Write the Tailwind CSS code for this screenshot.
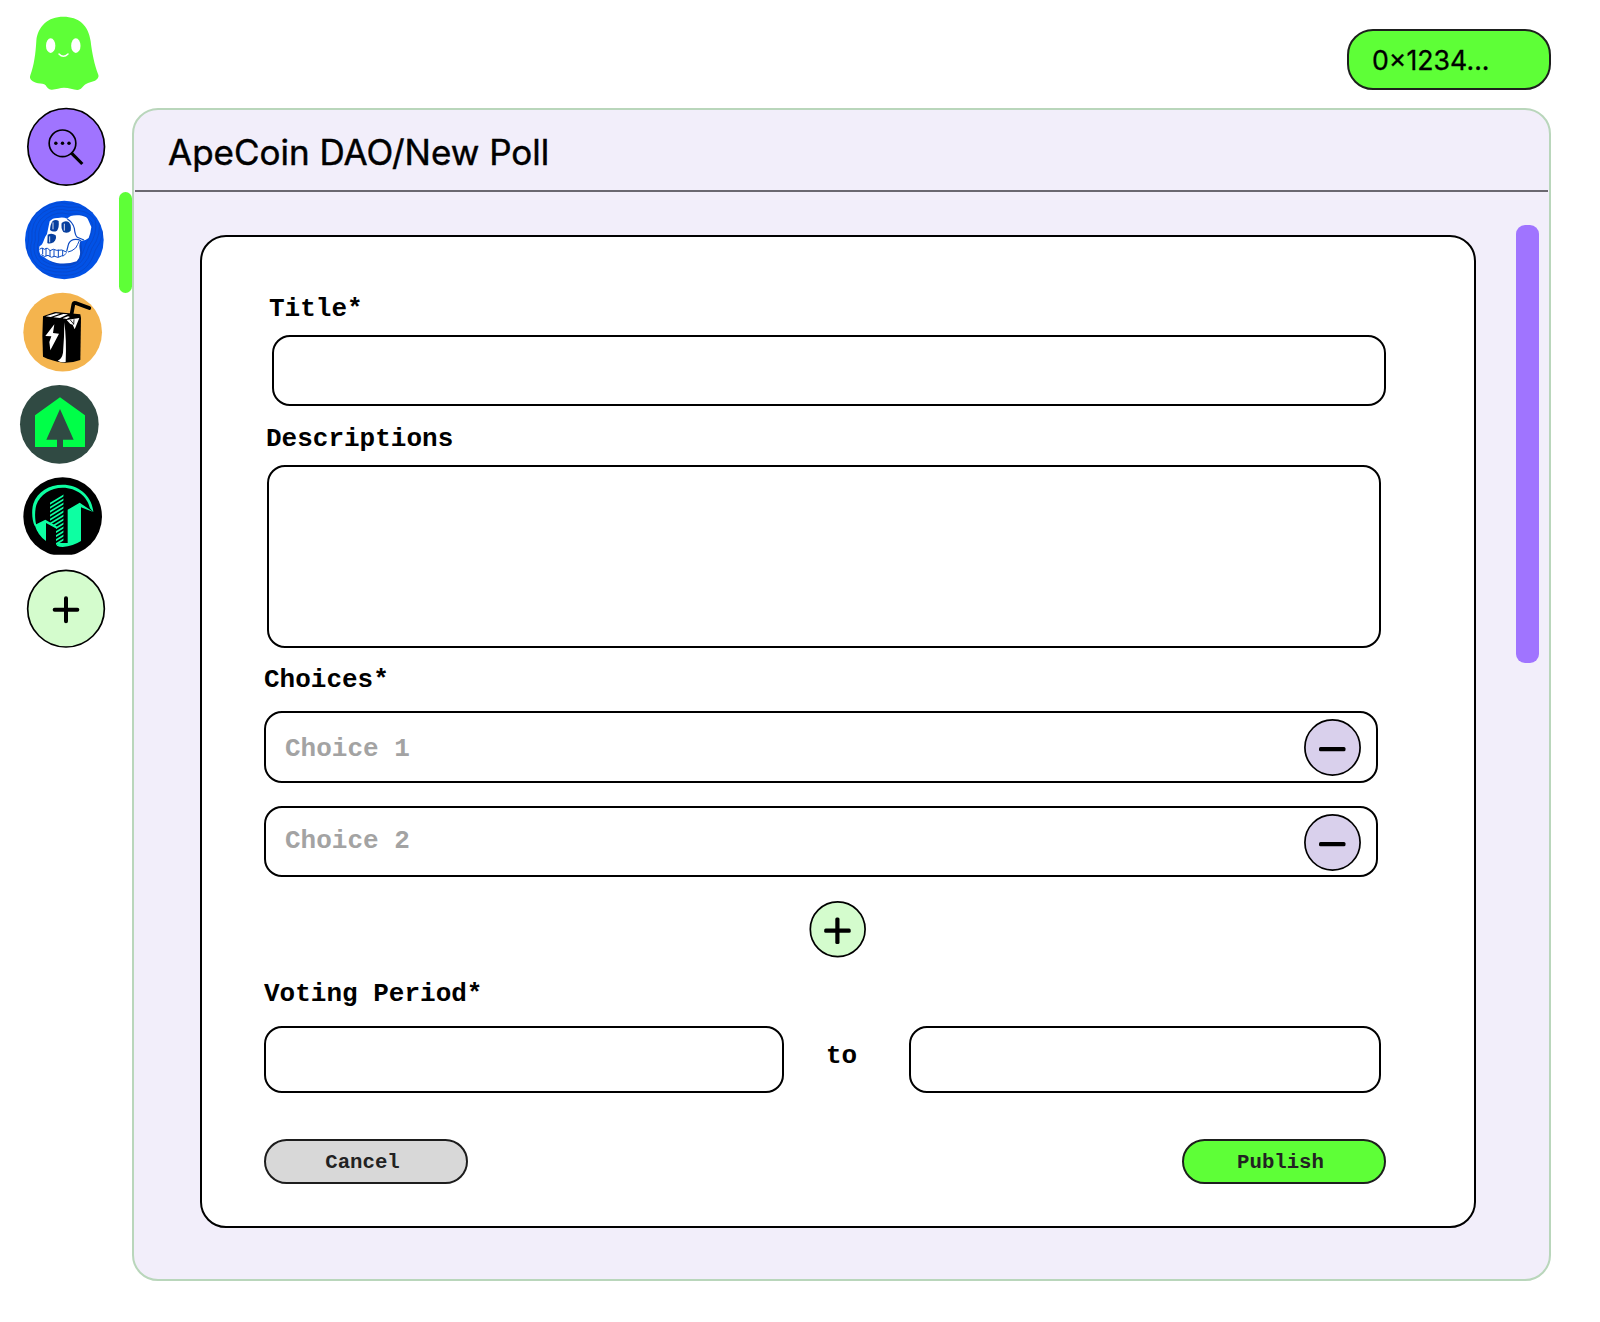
<!DOCTYPE html>
<html lang="en">
<head>
<meta charset="utf-8">
<title>ApeCoin DAO - New Poll</title>
<script src="https://cdn.jsdelivr.net/npm/@tailwindcss/browser@4"></script>
</head>
<body class="bg-white text-black">
<div class="relative flex h-[1322px] w-[1600px] overflow-hidden">

  <!-- Space switcher -->
  <aside class="relative flex w-[132px] shrink-0 flex-col items-start pt-[14px]">
    <svg class="ml-[28px] h-[78px] w-[72px]" viewBox="84 42 216 234">
      <path fill="#5eff37" d="M190 50C144 50 114 78 109 122C107 160 102 196 91 226C86 238 98 246 114 250C124 252 132 250 137 256C142 264 146 270 156 269C168 268 180 263 192 263C206 263 220 268 232 270C244 270 248 258 258 252C266 246 276 246 285 242C294 236 298 230 294 222C284 196 276 160 272 124C266 76 236 50 190 50Z"/>
      <ellipse cx="152" cy="137" rx="14" ry="22" fill="#fff"/>
      <ellipse cx="227.500" cy="137" rx="14" ry="22" fill="#fff"/>
      <path d="M177 162Q190 176 204 162" fill="none" stroke="#fff" stroke-width="4.500" stroke-linecap="round"/>
    </svg>

    <svg class="mt-[15px] ml-[26px] size-[80px]" viewBox="78 321 240 240">
      <circle cx="198.500" cy="440.500" r="115" fill="#a074ff" stroke="#000" stroke-width="5"/>
      <circle cx="187.500" cy="430" r="40" fill="none" stroke="#000" stroke-width="5"/>
      <circle cx="167.500" cy="430" r="5.200"/><circle cx="187.500" cy="430" r="5.200"/><circle cx="207" cy="430" r="5.200"/>
      <path d="M213 458L247 492" stroke="#000" stroke-width="9.500"/>
    </svg>

    <svg class="mt-[13px] ml-[24px] size-[80px]" viewBox="42 30 240 240">
      <clipPath id="apeClip"><circle cx="163" cy="150" r="118"/></clipPath>
      <circle cx="163" cy="150" r="118" fill="#0252e6"/>
      <g clip-path="url(#apeClip)" fill="none" stroke="#0a45c2" stroke-width="2">
        <path d="M76 150Q70 100 105 76Q140 50 175 62Q230 54 256 90Q264 130 236 170Q220 232 170 236Q100 240 80 204Q66 180 76 150Z"/>
        <path d="M66 150Q60 94 99 67Q140 40 175 52Q238 44 266 86Q276 134 246 174Q228 242 170 246Q94 250 70 210Q56 180 66 150Z"/>
        <path d="M56 150Q50 88 93 58Q140 30 175 42Q246 34 276 82Q288 138 256 180Q236 252 170 256Q88 260 60 216Q46 180 56 150Z"/>
        <path d="M86 150Q82 108 110 85Q140 62 175 72Q220 66 246 96Q252 126 228 160Q212 222 170 227Q106 230 88 199Q78 178 86 150Z"/>
      </g>
      <path fill="#0747c8" d="M106 170L124 218Q150 228 180 228Q214 220 217 190L213 152L240 140L234 110L200 92Z"/>
      <path fill="#fff" d="M119 94Q128 83 144 84Q158 80 172 86Q180 74 208 76Q226 78 233 86L244 111Q242 130 236 144Q224 154 212 152Q205 164 210 182Q212 202 200 214Q172 224 140 219Q112 212 103 202L92 196Q84 182 89 168Q96 166 101 152Q106 138 111 132Z"/>
      <g fill="#073f9e">
        <path d="M128 93Q137 87 146 93Q148 112 141 122Q130 128 120 120Q121 102 128 93Z"/>
        <path d="M155 99Q166 90 177 97Q185 106 182 122Q174 132 160 126Q152 114 155 99Z"/>
        <path d="M113 134Q127 128 137 136Q141 147 131 157Q118 163 112 159Z"/>
      </g>
      <path d="M129 97V118M163 101V122M119 139V157" stroke="#fff" stroke-width="2.500"/>
      <path d="M172 87Q188 96 193 115Q195 136 202 142L222 150M213 152Q202 146 190 149Q177 153 174 168L170 184" fill="none" stroke="#0a49c2" stroke-width="3.500"/>
      <path d="M208 152Q203 164 197 174Q186 184 174 186" fill="none" stroke="#0a49c2" stroke-width="3"/>
      <path d="M88 178Q96 170 104 178Q112 170 120 182Q130 174 140 181Q156 176 171 187M94 194Q104 204 114 196Q124 206 134 199Q144 206 154 198Q162 200 168 190M98 174V193M108 175V198M120 180V200M132 179V201M145 179V201M158 181V198" fill="none" stroke="#0a49c2" stroke-width="3"/>
    </svg>

    <svg class="mt-[12px] ml-[23px] size-[80px]" viewBox="39 306 240 240">
      <circle cx="158" cy="426.500" r="118" fill="#f4b44e"/>
      <path d="M184 376L190 343Q191 338 197 339L238 354" fill="none" stroke="#000" stroke-width="11" stroke-linecap="round" stroke-linejoin="round"/>
      <path d="M99 379L135 366L211 373L213 384L211 510Q188 519 160 518Q124 512 99 500Q95 440 99 379Z"/>
      <path fill="#fff" d="M107 379L138 370L150 371L122 381ZM130 382L160 372L174 373L150 384ZM158 385L174 379L180 381L170 387ZM170 390L208 384L194 418L188 404L181 402Z"/>
      <path fill="none" stroke="#000" stroke-width="2.500" d="M192 388L191 404M181 390L191 402"/>
      <path fill="#fff" d="M133 403L106 438L124 439L118 456L121 481L147 431L129 429Z"/>
      <path fill="#fff" d="M163 397Q170 450 167 516Q154 518 143 512Q156 506 159 488Q163 440 163 397Z"/>
    </svg>

    <svg class="mt-[12px] ml-[19px] size-[80px]" viewBox="27 27 240 240">
      <circle cx="148" cy="148" r="118" fill="#304a43"/>
      <path fill="#00ff48" d="M150 67L225 121V216H159V194H191L150 102L109 194H141V216H75V121Z"/>
    </svg>

    <svg class="mt-[13px] ml-[23px] size-[80px]" viewBox="39 306 240 240">
      <clipPath id="cityClip"><rect x="39" y="300" width="240" height="239"/></clipPath>
      <clipPath id="towerClip"><path d="M120 370L161 350V510H138V456L120 446Z"/></clipPath>
      <g clip-path="url(#cityClip)">
        <circle cx="158" cy="425" r="118"/>
        <g fill="#0dffa2">
          <path d="M74 452C66 438 64 405 70 386C82 350 118 329 158 329C206 329 246 362 250 411L240 400C232 364 200 338 158 338C122 338 90 358 79 390C74 408 74 432 79 450Z"/>
          <path d="M74 450L106 434L140 454V461L108 444V498Q84 482 74 450Z"/>
          <path d="M173 404L209 383L250 411L213 397V498Q190 513 158 516Q148 516 140 512L144 503L158 504H173Z"/>
        </g>
        <path clip-path="url(#towerClip)" fill="none" stroke="#0dffa2" stroke-width="5.200" d="M112 391L166 358M112 403L166 370M112 415L166 382M112 427L166 394M112 439L166 406M112 451L166 418M112 463L166 430M112 475L166 442M112 487L166 454M112 499L166 466M112 511L166 478M112 523L166 490"/>
      </g>
    </svg>

    <svg class="mt-[12px] ml-[26px] size-[80px]" viewBox="48 27 240 240">
      <circle cx="168" cy="146" r="115" fill="#d4fccd" stroke="#000" stroke-width="5"/>
      <path d="M168 115V184M134 149.500H202" stroke="#000" stroke-width="12" stroke-linecap="round"/>
    </svg>

    <span class="absolute top-[192px] right-0 h-[101px] w-[13px] rounded-[6.5px] bg-[#5eff37]"></span>
  </aside>

  <div class="flex w-[1419px] flex-col">
    <!-- Wallet -->
    <header class="flex h-[108px] shrink-0 justify-end pt-[29px]">
      <button class="flex h-[61px] w-[204px] items-center rounded-[26px] border-2 border-[#1d1f1d] bg-[#5eff37] pl-[23px] font-['Inter',sans-serif] text-[26.700px] leading-[32px] [-webkit-text-stroke:0.3px_black]">0×1234...</button>
    </header>

    <main class="relative flex h-[1173px] flex-col rounded-[26px] border-2 border-[#b9d6bb] bg-[#f2eefa]">
      <h1 class="mx-px flex h-[82px] shrink-0 items-center border-b-2 border-[#6b6870] pl-[33px] pt-[4px] font-['Inter',sans-serif] text-[35px] leading-[40px] font-normal [-webkit-text-stroke:0.45px_black]"><span>ApeCoin DAO/New Poll</span></h1>

      <form class="mt-[43px] ml-[66px] flex h-[993px] w-[1276px] flex-col rounded-[26px] border-2 border-black bg-white pt-[57px] pl-[62px] font-['Liberation_Mono',monospace] text-[26px] leading-[30px] font-bold">
        <label class="ml-[5px]">Title*</label>
        <div class="mt-[11px] ml-[8px] h-[71px] w-[1114px] rounded-[18px] border-2 border-black"></div>

        <label class="mt-[18px] ml-[2px]">Descriptions</label>
        <div class="mt-[11px] ml-[3px] h-[183px] w-[1114px] rounded-[18px] border-2 border-black"></div>

        <label class="mt-[17px]">Choices*</label>
        <div class="mt-[16px] flex h-[72px] w-[1114px] items-center justify-between rounded-[18px] border-2 border-black pr-[15px] pl-[19px]">
          <span class="pt-[3px] text-[#a3a3a3]">Choice 1</span>
          <svg class="size-[57px]" viewBox="0 0 57 57"><circle cx="28.500" cy="28.500" r="27.600" fill="#d9d0ec" stroke="#000" stroke-width="1.700"/><rect x="15" y="28" width="26.500" height="4.300" rx="1.500"/></svg>
        </div>
        <div class="mt-[23px] flex h-[71px] w-[1114px] items-center justify-between rounded-[18px] border-2 border-black pr-[15px] pl-[19px]">
          <span class="pb-[2px] text-[#a3a3a3]">Choice 2</span>
          <svg class="mt-px size-[57px]" viewBox="0 0 57 57"><circle cx="28.500" cy="28.500" r="27.600" fill="#d9d0ec" stroke="#000" stroke-width="1.700"/><rect x="15" y="28" width="26.500" height="4.300" rx="1.500"/></svg>
        </div>

        <svg class="mt-[24px] ml-[545px] size-[57px] shrink-0" viewBox="0 0 57 57"><circle cx="28.700" cy="28.300" r="27.400" fill="#d4fccd" stroke="#000" stroke-width="1.700"/><rect x="15.200" y="27.500" width="26.500" height="4.200" rx="1.500"/><rect x="26.300" y="16.400" width="4.200" height="26.500" rx="1.500"/></svg>

        <label class="mt-[21px]">Voting Period*</label>
        <div class="mt-[17px] flex h-[67px]">
          <div class="w-[520px] rounded-[18px] border-2 border-black"></div>
          <span class="w-[125px] pt-[15px] pl-[42px]">to</span>
          <div class="w-[472px] rounded-[18px] border-2 border-black"></div>
        </div>

        <div class="mt-[46px] flex h-[45px] w-[1122px] justify-between text-[20.700px] leading-[24px] text-[#222]">
          <button type="button" class="flex w-[204px] items-center justify-center rounded-[23px] border-2 border-[#1d1d1d] bg-[#d8d8d8] pt-[2px] pr-[7px]">Cancel</button>
          <button type="button" class="flex w-[204px] items-center justify-center rounded-[23px] border-2 border-[#1d1f1d] bg-[#5eff37] pt-[2px] pr-[7px]">Publish</button>
        </div>
      </form>

      <!-- Scrollbar thumb -->
      <span class="absolute top-[115px] right-[10px] h-[438px] w-[23px] rounded-[9px] bg-[#a074ff]"></span>
    </main>
  </div>
</div>
</body>
</html>
